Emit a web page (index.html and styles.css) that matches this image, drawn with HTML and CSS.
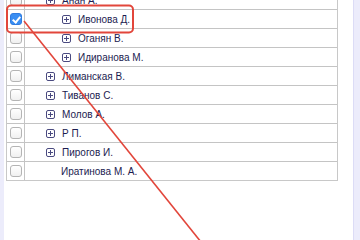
FILE: index.html
```html
<!DOCTYPE html>
<html lang="ru">
<head>
    <meta charset="UTF-8">
    <title>Список</title>
    <link rel="stylesheet" href="styles.css">
</head>
<body>
    <div class="screen">
        <div class="edge left"></div>
        <div class="main">
            <div class="table">
                <div class="row"><div class="cell check"><span class="box"></span></div><div class="cell name l1"><span class="plus"></span>Анан А.</div></div>
                <div class="row"><div class="cell check"><span class="box checked"></span></div><div class="cell name l2"><span class="plus"></span>Ивонова Д.</div></div>
                <div class="row"><div class="cell check"><span class="box"></span></div><div class="cell name l2"><span class="plus"></span>Оганян В.</div></div>
                <div class="row"><div class="cell check"><span class="box"></span></div><div class="cell name l2"><span class="plus"></span>Идиранова М.</div></div>
                <div class="row"><div class="cell check"><span class="box"></span></div><div class="cell name l1"><span class="plus"></span>Лиманская В.</div></div>
                <div class="row"><div class="cell check"><span class="box"></span></div><div class="cell name l1"><span class="plus"></span>Тиванов С.</div></div>
                <div class="row"><div class="cell check"><span class="box"></span></div><div class="cell name l1"><span class="plus"></span>Молов А.</div></div>
                <div class="row"><div class="cell check"><span class="box"></span></div><div class="cell name l1"><span class="plus"></span>Р П.</div></div>
                <div class="row"><div class="cell check"><span class="box"></span></div><div class="cell name l1"><span class="plus"></span>Пирогов И.</div></div>
                <div class="row"><div class="cell check"><span class="box"></span></div><div class="cell name l1 leaf">Иратинова М. А.</div></div>
            </div>
        </div>
        <div class="edge right"></div>

        <svg class="marks" width="360" height="240" viewBox="0 0 360 240">
            <rect x="7" y="5.5" width="126" height="27" rx="4" fill="none" stroke="#e2463b" stroke-width="2"/>
            <line x1="24" y1="21" x2="201" y2="242" stroke="#e2463b" stroke-width="1.6"/>
        </svg>
    </div>
</body>
</html>
```

FILE: styles.css
```css
body {
    margin: 0;
    background: white;
    font-family: "Liberation Sans", Arial, sans-serif;
}
.screen {
    position: relative;
    width: 360px;
    height: 240px;
    overflow: hidden;
    display: flex;
}
.edge {
    background-color: #ececfb;
}
.edge.left {
    width: 4px;
}
.edge.right {
    width: 6px;
    border-left: 1px solid #dcdcf6;
}
.main {
    flex: 1;
    padding-left: 2px;
}
.table {
    width: 330px;
    margin-top: -9px;
    border: 1px solid #c8c8c8;
    border-top: none;
}
.row {
    display: grid;
    grid-template-columns: 18px 1fr;
    height: 18px;
    border-bottom: 1px solid #c4c4c4;
}
.row:last-child {
    border-bottom: none;
}
.cell {
    display: flex;
    align-items: center;
}
.check {
    justify-content: center;
    border-right: 1px solid #c4c4c4;
}
.box {
    width: 10px;
    height: 10px;
    border: 1px solid #b4b4b4;
    border-radius: 3px;
    background: linear-gradient(#ffffff, #f0f0f0);
    position: relative;
}
.box.checked {
    background: #3a8ef2;
    border-color: #2f7be0;
}
.box.checked::after {
    content: "";
    position: absolute;
    left: 3px;
    top: 1px;
    width: 3px;
    height: 6px;
    border: solid white;
    border-width: 0 2px 2px 0;
    transform: rotate(40deg);
}
.name {
    font-size: 10px;
    color: #1c1c50;
    padding-top: 1px;
}
.name.l1 {
    padding-left: 21px;
}
.name.l2 {
    padding-left: 37px;
}
.name.leaf {
    padding-left: 36px;
}
.plus {
    width: 7px;
    height: 7px;
    border: 1px solid #4a4a80;
    border-radius: 2px;
    margin-right: 7px;
    margin-top: -1px;
    position: relative;
    background:
        linear-gradient(#4a4a80, #4a4a80) center / 5px 1px no-repeat,
        linear-gradient(#4a4a80, #4a4a80) center / 1px 5px no-repeat;
}
.marks {
    position: absolute;
    left: 0;
    top: 0;
}
```
